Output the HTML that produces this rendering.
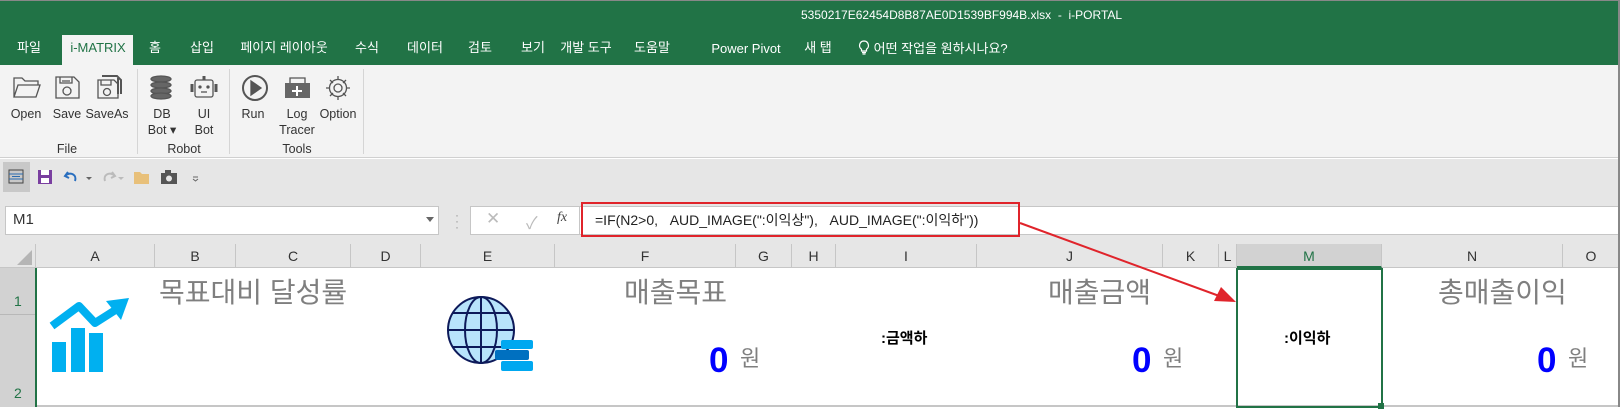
<!DOCTYPE html>
<html><head><meta charset="utf-8"><style>
*{margin:0;padding:0;box-sizing:border-box}
body{width:1620px;height:407px;overflow:hidden;background:#fff;font-family:"Liberation Sans","Noto Sans CJK KR",sans-serif;position:relative}
.a{position:absolute;white-space:nowrap}
.tab{position:absolute;top:40px;line-height:16px;color:#fff;font-size:13px;transform:translateX(-50%)}
.lbl{position:absolute;font-size:12.5px;color:#333;text-align:center;transform:translateX(-50%);line-height:16px}
.ch{position:absolute;top:244px;height:24px;line-height:24px;text-align:center;font-size:14px;color:#333;border-right:1px solid #c6c6c6}
.big{font-size:28px;color:#7f7f7f;line-height:1;top:279px}
.zero{font-size:35px;font-weight:bold;color:#0000ff;line-height:1;top:343px}
.won{font-size:22px;color:#7f7f7f;line-height:1;top:348px}
</style></head><body>
<!-- title + tabs -->
<div class="a" style="left:0;top:0;width:1620px;height:65px;background:#217346;border-top:1px solid #888"></div>
<div class="a" style="left:801px;top:8px;color:#fff;font-size:12px">5350217E62454D8B87AE0D1539BF994B.xlsx &nbsp;- &nbsp;i-PORTAL</div>
<div class="a" style="left:62px;top:35px;width:71px;height:30px;background:#f3f3f3"></div>
<div class="tab" style="left:29px">파일</div>
<div class="tab" style="left:98px;color:#217346">i-MATRIX</div>
<div class="tab" style="left:155px">홈</div>
<div class="tab" style="left:202px">삽입</div>
<div class="tab" style="left:284px">페이지 레이아웃</div>
<div class="tab" style="left:367px">수식</div>
<div class="tab" style="left:425px">데이터</div>
<div class="tab" style="left:480px">검토</div>
<div class="tab" style="left:533px">보기</div>
<div class="tab" style="left:586px">개발 도구</div>
<div class="tab" style="left:652px">도움말</div>
<div class="tab" style="left:746px;top:41px">Power Pivot</div>
<div class="tab" style="left:818px">새 탭</div>
<div class="a" style="left:858px;top:40px;line-height:16px;color:#fff;font-size:13px"><svg width="12" height="15" viewBox="0 0 12 15" style="vertical-align:-2px"><path d="M6 1a4.5 4.5 0 0 0-2.5 8.2V11h5V9.2A4.5 4.5 0 0 0 6 1zM4 12.5h4M4.5 14h3" fill="none" stroke="#fff" stroke-width="1.2"/></svg> 어떤 작업을 원하시나요?</div>
<!-- ribbon -->
<div class="a" style="left:0;top:65px;width:1620px;height:93px;background:#f3f3f3;border-bottom:1px solid #d0d0d0"></div>
<div class="a" style="left:137px;top:69px;width:1px;height:85px;background:#d5d5d5"></div>
<div class="a" style="left:229px;top:69px;width:1px;height:85px;background:#d5d5d5"></div>
<div class="a" style="left:363px;top:69px;width:1px;height:85px;background:#d5d5d5"></div>
<svg class="a" style="left:0;top:65px" width="370" height="40" viewBox="0 65 370 40" fill="none" stroke="#555" stroke-width="1.3">
<path d="M14 97V78h8l3 3h13v4M14 97l4-12h22l-4 12z"/>
<path d="M56 77h18l5 5v16H56z M60 77v6h12v-6 M62 81h8"/><circle cx="67" cy="91" r="4"/>
<path d="M98 80h16l4 4v14H98z M101 80v5h10v-5"/><circle cx="107" cy="92" r="3.5"/><path d="M102 76h15l4 4v14 M118 78v16" stroke-width="2"/>
<ellipse cx="161" cy="79" rx="10" ry="3" fill="#666"/><ellipse cx="161" cy="85" rx="10" ry="3" fill="#666"/><ellipse cx="161" cy="91" rx="10" ry="3" fill="#666"/><ellipse cx="161" cy="96" rx="10" ry="3" fill="#666"/>
<rect x="195" y="80" width="18" height="17" rx="2"/><path d="M204 76v4M192 84v8M216 84v8" stroke-width="3"/><circle cx="200" cy="87" r="1" fill="#555"/><circle cx="208" cy="87" r="1" fill="#555"/><path d="M201 92h6"/>
<circle cx="255" cy="88" r="12" stroke-width="2"/><path d="M251 81l10 7-10 7z" fill="#555"/>
<rect x="285" y="83" width="25" height="15" fill="#666" stroke="none"/><path d="M290 83v-5h15v5"/><path d="M297 86v10M292 91h10" stroke="#fff" stroke-width="2"/>
<circle cx="338" cy="88" r="4"/><path d="M338 76v4M338 96v4M326 88h4M346 88h4M330 80l3 3M343 93l3 3M330 96l3-3M343 83l3-3"/><circle cx="338" cy="88" r="8.5"/>
</svg>
<div class="lbl" style="left:26px;top:106px">Open</div>
<div class="lbl" style="left:67px;top:106px">Save</div>
<div class="lbl" style="left:107px;top:106px">SaveAs</div>
<div class="lbl" style="left:162px;top:106px">DB<br>Bot ▾</div>
<div class="lbl" style="left:204px;top:106px">UI<br>Bot</div>
<div class="lbl" style="left:253px;top:106px">Run</div>
<div class="lbl" style="left:297px;top:106px">Log<br>Tracer</div>
<div class="lbl" style="left:338px;top:106px">Option</div>
<div class="lbl" style="left:67px;top:141px">File</div>
<div class="lbl" style="left:184px;top:141px">Robot</div>
<div class="lbl" style="left:297px;top:141px">Tools</div>
<!-- QAT + formula area -->
<div class="a" style="left:0;top:159px;width:1620px;height:85px;background:#e6e6e6"></div>
<div class="a" style="left:3px;top:162px;width:27px;height:30px;background:#c8c8c8"></div>
<svg class="a" style="left:0;top:160px" width="210" height="36" fill="none">
<rect x="9" y="10" width="14" height="13" stroke="#444"/><path d="M9 14h14M9 19h14M12 16.5h8" stroke="#2b6cb0"/>
<rect x="38" y="10" width="14" height="14" fill="#7a3fa0"/><rect x="41" y="10" width="8" height="5" fill="#fff"/><rect x="41" y="18" width="8" height="5" fill="#fff"/>
<path d="M68 12l-3 4 4 2M65 16c6-5 12-1 10 5" stroke="#2a6fbf" stroke-width="2"/><path d="M86 17l3 3 3-3" fill="#666"/>
<path d="M112 12l3 4-4 2M115 16c-6-5-12-1-10 5" stroke="#bbb" stroke-width="2"/><path d="M118 17l3 3 3-3" fill="#bbb"/>
<path d="M134 12h6l2 2h7v10h-15z" fill="#e8c07a"/>
<rect x="161" y="13" width="16" height="11" fill="#555"/><rect x="165" y="10" width="6" height="3" fill="#555"/><circle cx="169" cy="18.5" r="3" fill="#e6e6e6"/>
<path d="M193 17h5M193 19l2.5 2 2.5-2" stroke="#666"/>
</svg>
<div class="a" style="left:5px;top:206px;width:434px;height:29px;background:#fff;border:1px solid #c6c6c6"></div>
<div class="a" style="left:13px;top:211px;font-size:15px;color:#333">M1</div>
<div class="a" style="left:426px;top:217px;width:0;height:0;border-left:4px solid transparent;border-right:4px solid transparent;border-top:5px solid #666"></div>
<div class="a" style="left:455px;top:212px;color:#999;font-size:12px;line-height:6px">·<br>·<br>·</div>
<div class="a" style="left:470px;top:206px;width:110px;height:29px;background:#fff;border:1px solid #c6c6c6"></div>
<div class="a" style="left:486px;top:209px;color:#bbb;font-size:17px">✕</div>
<div class="a" style="left:526px;top:209px;color:#bbb;font-size:17px">✓</div>
<div class="a" style="left:557px;top:210px;color:#444;font-size:14px;font-style:italic;font-family:'Liberation Serif',serif">fx</div>
<div class="a" style="left:580px;top:206px;width:1040px;height:29px;background:#fff;border-top:1px solid #c6c6c6;border-bottom:1px solid #c6c6c6"></div>
<div class="a" style="left:581px;top:202px;width:439px;height:35px;border:2px solid #e0242b"></div>
<div class="a" style="left:595px;top:210px;font-size:14px;color:#222">=IF(N2&gt;0, &nbsp;&nbsp;AUD_IMAGE(":이익상"), &nbsp;&nbsp;AUD_IMAGE(":이익하"))</div>
<!-- column headers -->
<div class="a" style="left:0;top:244px;width:1620px;height:24px;background:#e6e6e6;border-bottom:1px solid #c6c6c6"></div>
<div class="a" style="left:0;top:244px;width:36px;height:24px;border-right:1px solid #c6c6c6"></div>
<div class="a" style="left:17px;top:250px;width:0;height:0;border-left:15px solid transparent;border-bottom:15px solid #b5b5b5"></div>
<div class="ch" style="left:36px;width:119px">A</div>
<div class="ch" style="left:155px;width:81px">B</div>
<div class="ch" style="left:236px;width:115px">C</div>
<div class="ch" style="left:351px;width:70px">D</div>
<div class="ch" style="left:421px;width:134px">E</div>
<div class="ch" style="left:555px;width:181px">F</div>
<div class="ch" style="left:736px;width:56px">G</div>
<div class="ch" style="left:792px;width:44px">H</div>
<div class="ch" style="left:836px;width:141px">I</div>
<div class="ch" style="left:977px;width:186px">J</div>
<div class="ch" style="left:1163px;width:56px">K</div>
<div class="ch" style="left:1219px;width:18px">L</div>
<div class="ch" style="left:1237px;width:145px;background:#d2d2d2;color:#217346;border-bottom:2px solid #217346">M</div>
<div class="ch" style="left:1382px;width:181px">N</div>
<div class="ch" style="left:1563px;width:57px">O</div>
<!-- row headers -->
<div class="a" style="left:0;top:268px;width:37px;height:139px;background:#d2d2d2;border-right:2px solid #217346"></div>
<div class="a" style="left:0;top:314px;width:35px;height:1px;background:#b8b8b8"></div>
<div class="a" style="left:14px;top:293px;font-size:14px;color:#217346">1</div>
<div class="a" style="left:14px;top:385px;font-size:14px;color:#217346">2</div>
<div class="a" style="left:37px;top:405px;width:1583px;height:2px;background:#c6c6c6"></div>
<!-- content -->
<svg class="a" style="left:48px;top:295px" width="82" height="80" viewBox="0 0 82 80">
<path d="M4 31L31 11l16 17 22-14" fill="none" stroke="#00b0f0" stroke-width="8" stroke-linejoin="round"/>
<path d="M58 6l23-3-8 22z" fill="#00b0f0"/>
<rect x="4" y="47" width="14" height="30" fill="#00b0f0"/><rect x="23" y="33" width="14" height="44" fill="#00b0f0"/><rect x="41" y="38" width="14" height="39" fill="#00b0f0"/>
</svg>
<div class="a big" style="left:159px">목표대비 달성률</div>
<svg class="a" style="left:447px;top:293px" width="90" height="82" viewBox="0 0 90 82">
<circle cx="34" cy="37" r="33" fill="#b8e4fb" stroke="#0d1a5a" stroke-width="2"/>
<ellipse cx="34" cy="37" rx="16" ry="33" fill="none" stroke="#0d1a5a" stroke-width="2"/>
<path d="M34 4v66M1 37h66M6 20h56M6 54h56" stroke="#0d1a5a" stroke-width="2" fill="none"/>
<rect x="54" y="47" width="32" height="9" rx="2" fill="#00a8f0"/><rect x="48" y="57" width="34" height="10" rx="2" fill="#0070c0"/><rect x="54" y="68" width="32" height="10" rx="2" fill="#00a8f0"/>
</svg>
<div class="a big" style="left:624px">매출목표</div>
<div class="a zero" style="left:709px">0</div>
<div class="a won" style="left:740px">원</div>
<div class="a" style="left:881px;top:327px;font-size:15px;font-weight:bold;color:#000">:금액하</div>
<div class="a big" style="left:1048px">매출금액</div>
<div class="a zero" style="left:1132px">0</div>
<div class="a won" style="left:1163px">원</div>
<div class="a" style="left:1236px;top:268px;width:147px;height:140px;border:2px solid #217346"></div>
<div class="a" style="left:1378px;top:403px;width:6px;height:6px;background:#217346"></div>
<div class="a" style="left:1284px;top:327px;font-size:15px;font-weight:bold;color:#000">:이익하</div>
<div class="a big" style="left:1438px">총매출이익</div>
<div class="a zero" style="left:1537px">0</div>
<div class="a won" style="left:1568px">원</div>
<div class="a" style="left:1618px;top:0;width:2px;height:407px;background:#888"></div>
<svg class="a" style="left:0;top:0" width="1620" height="407">
<line x1="1020" y1="223" x2="1222" y2="297" stroke="#e0242b" stroke-width="2"/>
<path d="M1236 302l-22-1 7-14z" fill="#e0242b"/>
</svg>
</body></html>
